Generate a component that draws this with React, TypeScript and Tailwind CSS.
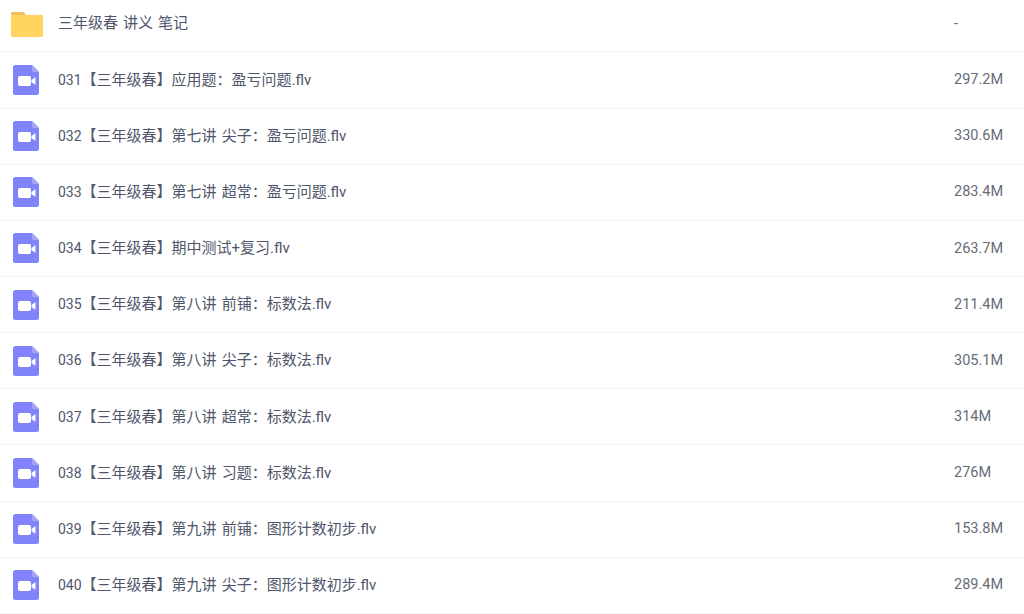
const files = [
  { num: "031", name: "【三年级春】应用题：盈亏问题.flv", size: "297.2M" },
  { num: "032", name: "【三年级春】第七讲 尖子：盈亏问题.flv", size: "330.6M" },
  { num: "033", name: "【三年级春】第七讲 超常：盈亏问题.flv", size: "283.4M" },
  { num: "034", name: "【三年级春】期中测试+复习.flv", size: "263.7M" },
  { num: "035", name: "【三年级春】第八讲 前铺：标数法.flv", size: "211.4M" },
  { num: "036", name: "【三年级春】第八讲 尖子：标数法.flv", size: "305.1M" },
  { num: "037", name: "【三年级春】第八讲 超常：标数法.flv", size: "314M" },
  { num: "038", name: "【三年级春】第八讲 习题：标数法.flv", size: "276M" },
  { num: "039", name: "【三年级春】第九讲 前铺：图形计数初步.flv", size: "153.8M" },
  { num: "040", name: "【三年级春】第九讲 尖子：图形计数初步.flv", size: "289.4M" },
];

function FolderIcon() {
  return (
    <svg width="34" height="28" viewBox="0 0 34 28" className="ml-[10px] shrink-0">
      <path d="M1 3.500A1.500 1.500 0 0 1 2.500 2h10.200c.9 0 1.500.4 2 1.100L16 5H1z" fill="#f3bd5c" />
      <path d="M1 6.500A1.500 1.500 0 0 1 2.500 5h28A1.500 1.500 0 0 1 33 6.500v19a1.500 1.500 0 0 1-1.500 1.500h-29A1.500 1.500 0 0 1 1 25.500z" fill="#ffd45f" />
    </svg>
  );
}

function VideoIcon() {
  return (
    <svg width="27" height="30" viewBox="0 0 27 30" className="ml-[13px] shrink-0">
      <path d="M2.500 0H19l7 7v20.500a2.500 2.500 0 0 1-2.500 2.500h-21A2.500 2.500 0 0 1 0 27.500v-25A2.500 2.500 0 0 1 2.500 0z" fill="#8183f8" />
      <path d="M19 0l7 7h-5a2 2 0 0 1-2-2z" fill="#a5a6fa" />
      <rect x="5" y="11" width="13" height="10" rx="2" fill="#fff" />
      <path d="M18.500 15l3-2.300a.6.600 0 0 1 1 .5v5.600a.6.600 0 0 1-1 .5l-3-2.300z" fill="#fff" />
    </svg>
  );
}

function Row({ icon, num, name, size, first }: { icon: React.ReactNode; num?: string; name: string; size: string; first?: boolean }) {
  return (
    <div className={`flex items-center border-b border-[#f2f4f8] ${first ? "h-[52.4px] pb-[4px]" : "h-[56.15px]"}`}>
      <div className="flex w-[58px] shrink-0 items-center">{icon}</div>
      <div className="flex-1 text-[15px] text-[#4f566b] [word-spacing:1.3px]">
        {num && <span className="text-[14px]">{num}</span>}
        {name}
      </div>
      <div className="w-[70px] shrink-0 text-[14.5px] text-[#666b78]">{size}</div>
    </div>
  );
}

export default function App() {
  return (
    <div className="h-[614px] w-[1024px] overflow-hidden bg-white font-['Roboto','Noto_Sans_CJK_SC',sans-serif]">
      <Row first icon={<FolderIcon />} name="三年级春 讲义 笔记" size="-" />
      {files.map((f) => (
        <Row key={f.num} icon={<VideoIcon />} num={f.num} name={f.name} size={f.size} />
      ))}
    </div>
  );
}
